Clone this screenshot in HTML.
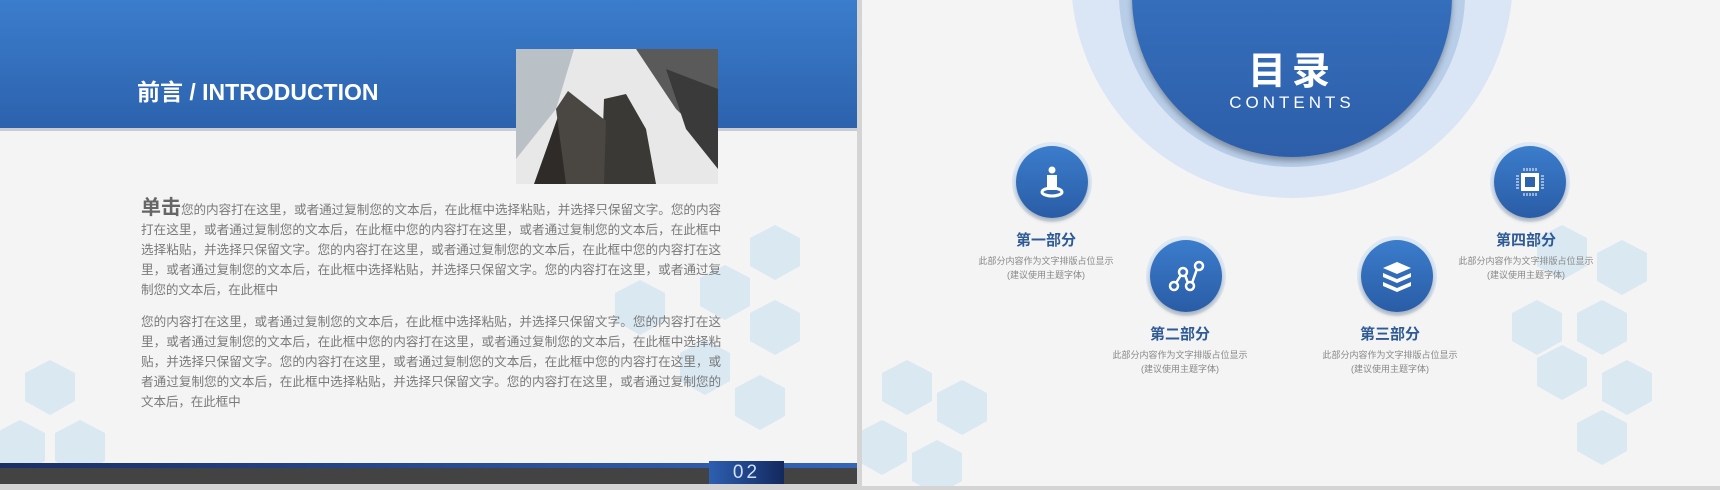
<!DOCTYPE html>
<html><head><meta charset="utf-8"><style>
*{margin:0;padding:0;box-sizing:border-box}
body{width:1720px;height:490px;background:#d4d4d4;position:relative;overflow:hidden;font-family:"Liberation Sans","Noto Sans CJK SC",sans-serif}
.slide{position:absolute;top:0;height:484px;background:#f4f4f4;overflow:hidden}
#L{left:0;width:857px}
#R{left:862px;width:858px;height:486px}
.hdr{position:absolute;left:0;top:0;width:857px;height:131px;background:linear-gradient(#3b7dcc,#2c62ad);border-bottom:3px solid #c9cdd3}
.title{position:absolute;left:137px;top:73px;color:#fff;font-size:23px;font-weight:bold;letter-spacing:0}
.photo{position:absolute;left:516px;top:49px;width:202px;height:135px}
.body{position:absolute;left:141px;width:580px;color:#7a7a7a;font-size:12.6px;line-height:20px;text-align:justify;letter-spacing:-0.15px}
.body b{font-size:20px;color:#666}
.c{position:absolute;border-radius:50%}
.ic{position:absolute;width:80px;height:80px;border-radius:50%;background:#dde8f5}
.ic i{position:absolute;left:4px;top:4px;width:72px;height:72px;border-radius:50%;background:linear-gradient(#3b7dcc,#2a5ca6);box-shadow:0 3px 4px rgba(0,0,0,.25)}
.ic svg{position:absolute;left:20px;top:20px}
.lab{position:absolute;width:200px;text-align:center;color:#2e5a96;font-size:15px;font-weight:bold}
.lab p{color:#888;font-size:9px;font-weight:normal;line-height:14px;margin-top:4px}
</style></head><body>
<div class="slide" id="L">
<svg style="position:absolute;left:0;top:0" width="857" height="484"><g fill="#cfe3f0" opacity=".7">
<polygon points="775,225 800,238 800,266 775,280 750,266 750,238"/>
<polygon points="725,265 750,278 750,306 725,320 700,306 700,278"/>
<polygon points="775,300 800,313 800,341 775,355 750,341 750,313"/>
<polygon points="640,280 665,293 665,321 640,335 615,321 615,293"/>
<polygon points="705,340 730,353 730,381 705,395 680,381 680,353"/>
<polygon points="760,375 785,388 785,416 760,430 735,416 735,388"/>
<polygon points="50,360 75,373 75,401 50,415 25,401 25,373"/>
<polygon points="20,420 45,433 45,461 20,475 -5,461 -5,433"/>
<polygon points="80,420 105,433 105,461 80,475 55,461 55,433"/>
</g></svg>
<div class="hdr"></div>
<div class="title">前言 / INTRODUCTION</div>
<svg class="photo" viewBox="0 0 202 135"><rect width="202" height="135" fill="#e8e8e8"/>
<polygon points="0,0 58,0 40,60 0,110" fill="#b9c0c6"/>
<polygon points="120,0 202,0 202,100 160,60" fill="#5a5a5a"/>
<polygon points="150,20 202,40 202,120 170,80" fill="#3a3a3a"/>
<polygon points="18,135 50,45 90,75 100,135" fill="#2e2b28"/>
<polygon points="85,135 88,50 110,45 130,80 140,135" fill="#3b3936"/>
<polygon points="40,60 52,42 90,72 88,135 50,135" fill="#4a4642"/>
</svg>
<div class="body" style="top:198px"><b>单击</b>您的内容打在这里，或者通过复制您的文本后，在此框中选择粘贴，并选择只保留文字。您的内容打在这里，或者通过复制您的文本后，在此框中您的内容打在这里，或者通过复制您的文本后，在此框中选择粘贴，并选择只保留文字。您的内容打在这里，或者通过复制您的文本后，在此框中您的内容打在这里，或者通过复制您的文本后，在此框中选择粘贴，并选择只保留文字。您的内容打在这里，或者通过复制您的文本后，在此框中</div>
<div class="body" style="top:312px">您的内容打在这里，或者通过复制您的文本后，在此框中选择粘贴，并选择只保留文字。您的内容打在这里，或者通过复制您的文本后，在此框中您的内容打在这里，或者通过复制您的文本后，在此框中选择粘贴，并选择只保留文字。您的内容打在这里，或者通过复制您的文本后，在此框中您的内容打在这里，或者通过复制您的文本后，在此框中选择粘贴，并选择只保留文字。您的内容打在这里，或者通过复制您的文本后，在此框中</div>
<div style="position:absolute;left:0;top:463px;width:857px;height:5px;background:linear-gradient(90deg,#1b2f66,#3465b8)"></div>
<div style="position:absolute;left:0;top:468px;width:857px;height:16px;background:#434343"></div>
<div style="position:absolute;left:709px;top:461px;width:75px;height:23px;background:linear-gradient(90deg,#2d5fb0,#13285e);color:#cfe0ff;font-size:19px;text-align:center;line-height:23px;letter-spacing:3px">02</div>
</div>
<div class="slide" id="R">
<svg style="position:absolute;left:0;top:0" width="858" height="486"><g fill="#cfe3f0" opacity=".7">
<polygon points="700,225 725,238 725,266 700,280 675,266 675,238"/>
<polygon points="760,240 785,253 785,281 760,295 735,281 735,253"/>
<polygon points="740,300 765,313 765,341 740,355 715,341 715,313"/>
<polygon points="675,300 700,313 700,341 675,355 650,341 650,313"/>
<polygon points="700,345 725,358 725,386 700,400 675,386 675,358"/>
<polygon points="765,360 790,373 790,401 765,415 740,401 740,373"/>
<polygon points="740,410 765,423 765,451 740,465 715,451 715,423"/>
<polygon points="45,360 70,373 70,401 45,415 20,401 20,373"/>
<polygon points="100,380 125,393 125,421 100,435 75,421 75,393"/>
<polygon points="20,420 45,433 45,461 20,475 -5,461 -5,433"/>
<polygon points="75,440 100,453 100,481 75,495 50,481 50,453"/>
</g></svg>
<div class="c" style="left:209px;top:-244px;width:442px;height:442px;background:#dae6f5"></div>
<div class="c" style="left:257px;top:-179px;width:346px;height:346px;background:#b8cde8"></div>
<div class="c" style="left:270px;top:-163px;width:320px;height:320px;background:linear-gradient(#3d7fcf,#2d5ea9);box-shadow:0 4px 6px rgba(0,0,0,.3)"></div>
<div style="position:absolute;left:330px;top:40px;width:200px;text-align:center;color:#fff;font-size:38px;font-weight:bold;letter-spacing:6px">目录</div>
<div style="position:absolute;left:330px;top:93px;width:200px;text-align:center;color:#fff;font-size:17px;letter-spacing:4px">CONTENTS</div>

<div class="ic" style="left:150px;top:142px"><i></i><svg width="40" height="40" viewBox="0 0 40 40" fill="none" stroke="#fff"><circle cx="20" cy="8" r="3.5" fill="#fff" stroke="none"/><rect x="15" y="13" width="10" height="15" fill="#fff" stroke="none"/><ellipse cx="20" cy="30" rx="10" ry="4" stroke-width="3"/></svg></div>
<div class="ic" style="left:284px;top:236px"><i></i><svg width="40" height="40" viewBox="0 0 40 40" fill="none" stroke="#fff" stroke-width="2.5"><circle cx="8" cy="30" r="4"/><circle cx="17" cy="16" r="4"/><circle cx="24" cy="30" r="4"/><circle cx="33" cy="10" r="4"/><path d="M10 27L15 19M19 19L22 27M26 27L31 13"/></svg></div>
<div class="ic" style="left:495px;top:236px"><i></i><svg width="40" height="40" viewBox="0 0 40 40" fill="#fff"><path d="M20 6L34 12L20 18L6 12Z"/><path d="M6 17L20 23L34 17V21L20 27L6 21Z"/><path d="M6 26L20 32L34 26V30L20 36L6 30Z"/></svg></div>
<div class="ic" style="left:628px;top:142px"><i></i><svg width="40" height="40" viewBox="0 0 40 40"><rect x="11" y="11" width="18" height="18" fill="#fff"/><rect x="15" y="15" width="10" height="10" fill="#2f62ad"/><g stroke="#fff" stroke-width="1"><path d="M14 6v3M17 6v3M20 6v3M23 6v3M26 6v3M14 31v3M17 31v3M20 31v3M23 31v3M26 31v3M6 14h3M6 17h3M6 20h3M6 23h3M6 26h3M31 14h3M31 17h3M31 20h3M31 23h3M31 26h3"/></g></svg></div>

<div class="lab" style="left:84px;top:229px">第一部分<p>此部分内容作为文字排版占位显示<br>(建议使用主题字体)</p></div>
<div class="lab" style="left:218px;top:323px">第二部分<p>此部分内容作为文字排版占位显示<br>(建议使用主题字体)</p></div>
<div class="lab" style="left:428px;top:323px">第三部分<p>此部分内容作为文字排版占位显示<br>(建议使用主题字体)</p></div>
<div class="lab" style="left:564px;top:229px">第四部分<p>此部分内容作为文字排版占位显示<br>(建议使用主题字体)</p></div>
</div>
</body></html>
